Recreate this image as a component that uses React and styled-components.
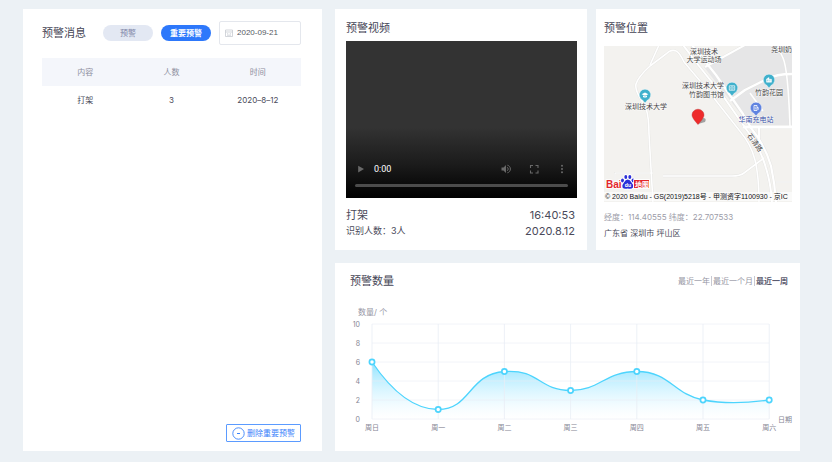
import React from "react";
import styled, { createGlobalStyle } from "styled-components";

const GlobalStyle = createGlobalStyle`
  *, *::before, *::after { box-sizing: border-box; }
  body {
    margin: 0;
    background: #ecf1f5;
    color: #4a4a5a;
    font-family: Inter, "Noto Sans CJK SC", sans-serif;
    font-size: 8px;
    line-height: 12px;
  }
  button, input { font: inherit; color: inherit; }
  h2, p { margin: 0; padding: 0; }
`;

const Page = styled.main`
  display: grid;
  grid-template-columns: minmax(0, 299fr) minmax(0, 465fr);
  gap: 13px;
  min-height: 100vh;
  padding: 9px 32px 11px 23px;
`;

const Column = styled.div`
  display: flex;
  flex-direction: column;
  gap: 13px;
`;

const TopRow = styled.div`
  display: grid;
  grid-template-columns: minmax(0, 252fr) minmax(0, 204fr);
  gap: 9px;
`;

const Card = styled.section`
  display: flex;
  flex-direction: column;
  background: #fff;
`;

const MessageCard = styled(Card)`
  padding: 12px 21px 9px 19px;
`;

const VideoCard = styled(Card)`
  padding: 10px 10px 11px 11px;
`;

const MapCard = styled(Card)`
  padding: 10px 8px 9px 8px;
`;

const ChartCard = styled(Card)`
  flex: 1;
  padding: 9px 0 0;
`;

const Title = styled.h2`
  font-size: 11px;
  line-height: 18px;
  font-weight: 400;
  color: #454555;
`;

const Toolbar = styled.div`
  display: flex;
  align-items: center;
  gap: 8px;
`;

const ToolbarTitle = styled(Title)`
  margin-right: 9px;
`;

const Pill = styled.button`
  width: 50px;
  height: 16px;
  padding: 0;
  border: 0;
  border-radius: 8px;
  line-height: 16px;
  font-weight: ${(p) => (p.$active ? 700 : 400)};
  color: ${(p) => (p.$active ? "#fff" : "#7d84a6")};
  background: ${(p) => (p.$active ? "#2d78fb" : "#e3e8f3")};
`;

const DateField = styled.label`
  display: flex;
  flex: 1;
  align-items: center;
  gap: 4px;
  min-width: 0;
  height: 24px;
  padding: 0 5px;
  border: 1px solid #e4e7ed;
  border-radius: 2px;
`;

const DateInput = styled.input`
  flex: 1;
  min-width: 0;
  padding: 0;
  border: 0;
  outline: 0;
  background: none;
  color: #555a62;
  font-family: "Liberation Sans", sans-serif;
`;

const Table = styled.table`
  width: 100%;
  margin-top: 13px;
  border-collapse: collapse;
  table-layout: fixed;
  text-align: center;

  th {
    height: 28px;
    padding: 0;
    font-weight: 400;
    color: #8e8ea0;
    background: #f4f6fb;
  }
  td {
    height: 28px;
    padding: 0;
  }
`;

const DeleteButton = styled.button`
  display: flex;
  align-items: center;
  align-self: flex-end;
  gap: 2px;
  height: 18px;
  margin-top: auto;
  padding: 0 5px;
  border: 1px solid #5b9bff;
  border-radius: 1px;
  background: #fff;
  color: #3a82fb;
`;

const Player = styled.div`
  display: flex;
  flex-direction: column;
  justify-content: flex-end;
  height: 157px;
  margin-top: 4px;
  padding: 0 9px 11px;
  background: linear-gradient(#333 0, #333 55%, #1c1c1c 78%, #000 100%);
`;

const Controls = styled.div`
  display: flex;
  align-items: center;
  gap: 18px;
  height: 16px;
  margin-bottom: 7px;
  padding: 0 1px;
`;

const PlayGroup = styled.div`
  display: flex;
  flex: 1;
  align-items: center;
  gap: 8px;
`;

const PlayTime = styled.span`
  color: #fff;
  font-family: Roboto, sans-serif;
  font-size: 9px;
`;

const ControlButton = styled.button`
  display: flex;
  padding: 0;
  border: 0;
  background: none;
  color: #696969;
`;

const Seek = styled.input`
  appearance: none;
  width: 100%;
  height: 3px;
  margin: 0;
  border-radius: 2px;
  background: #4c4c4c;
  &::-webkit-slider-thumb { appearance: none; width: 0; height: 0; }
`;

const InfoBlock = styled.div`
  margin-top: 9px;
`;

const InfoRow = styled.div`
  display: flex;
  align-items: center;
  justify-content: space-between;
  height: 16px;
  padding-right: 2px;
`;

const Large = styled.span`
  font-size: 11px;
`;

const Medium = styled.span`
  font-size: 9px;
`;

const MapDrawing = styled.svg`
  display: block;
  width: 100%;
  height: auto;
  margin-top: 9px;
`;

const Coordinates = styled.p`
  margin-top: 7px;
  line-height: 16px;
  color: #9c9ca8;
`;

const Address = styled.p`
  line-height: 16px;
`;

const ChartHeader = styled.header`
  display: flex;
  align-items: center;
  justify-content: space-between;
  padding: 0 11px 0 15px;
`;

const Ranges = styled.div`
  display: flex;
`;

const RangeButton = styled.button`
  padding: 0 1px;
  border: 0;
  border-left: ${(p) => (p.$first ? "0" : "1px solid #c9c9d2")};
  background: none;
  line-height: 10px;
  font-weight: ${(p) => (p.$active ? 700 : 400)};
  color: ${(p) => (p.$active ? "#5c5c70" : "#9696a4")};
`;

const ChartDrawing = styled.svg`
  display: block;
  width: 100%;
  height: auto;
`;

const CalendarIcon = () => (
  <svg width="8" height="8" viewBox="0 0 8 8" fill="none" stroke="#c0c4cc" strokeWidth=".7">
    <path d="M.5 1h7v6.5h-7zM.5 3h7M2 4.8h1.2M4.8 4.8h1.2M2 6.2h4" />
  </svg>
);

const MinusCircle = () => (
  <svg width="13" height="13" viewBox="0 0 13 13" fill="none" stroke="currentColor">
    <circle cx="6.5" cy="6.5" r="5.7" strokeWidth=".9" />
    <path d="M5 6.5h3" />
  </svg>
);

const PlayIcon = () => (
  <svg width="10" height="10" viewBox="0 0 10 10" fill="currentColor">
    <path d="M2.2 1.8v6.6L8 5.1z" />
  </svg>
);

const VolumeIcon = () => (
  <svg width="10" height="10" viewBox="0 0 10 10">
    <path d="M.5 3.5h2L5 1v8L2.5 6.5h-2z" fill="currentColor" />
    <path d="M6.2 3.2c1.3.9 1.3 2.7 0 3.6M6.4 1.2c4 1 4 6.6 0 7.6" fill="none" stroke="currentColor" />
  </svg>
);

const FullscreenIcon = () => (
  <svg width="10" height="10" viewBox="0 0 10 10" fill="none" stroke="currentColor" strokeWidth="1.1">
    <path d="M1.5 4V1.5H4M6.5 1.5H9V4M9 6.5V9H6.5M4 9H1.5V6.5" />
  </svg>
);

const MoreIcon = () => (
  <svg width="10" height="10" viewBox="0 0 10 10" fill="currentColor">
    <circle cx="5" cy="1.8" r="1" />
    <circle cx="5" cy="5" r="1" />
    <circle cx="5" cy="8.2" r="1" />
  </svg>
);

const days = ["周日", "周一", "周二", "周三", "周四", "周五", "周六"];
const values = [6, 1, 5, 3, 5, 2, 2];
const ticks = [10, 8, 6, 4, 2, 0];
const px = (i) => 37 + i * 66.2;
const py = (v) => 138 - v * 9.5;
const curve =
  "M37 81C56 109 78 128.5 103.2 128.5C136 128.5 133 93 169.4 90.5C205 88 203 109.5 235.6 109.5C265 109.5 270 90.5 301.8 90.5C335 90.5 338 113 368 119C390 123 412 122 434.2 119";

const CountChart = () => (
  <ChartDrawing viewBox="0 9 465 152" role="img" aria-label="预警数量">
    <defs>
      <linearGradient id="area" x1="0" y1="81" x2="0" y2="138" gradientUnits="userSpaceOnUse">
        <stop offset="0" stopColor="#8fe3ff" />
        <stop offset="1" stopColor="#fff" stopOpacity=".3" />
      </linearGradient>
    </defs>
    <text x="23" y="34" fontSize="8" fill="#9696a4">数量/ 个</text>
    <path d={`${curve}V138H37Z`} fill="url(#area)" />
    <g stroke="#e9edf5" strokeOpacity=".8">
      {ticks.map((t) => <path key={t} d={`M37 ${py(t)}H434`} strokeOpacity=".6" />)}
      {days.map((d, i) => <path key={d} d={`M${px(i)} 43V138`} />)}
    </g>
    <g fontSize="7" fill="#858594">
      {ticks.map((t) => <text key={t} x="25" y={py(t) + 3} textAnchor="end">{t}</text>)}
      {days.map((d, i) => <text key={d} x={px(i)} y="149" textAnchor="middle">{d}</text>)}
      <text x="443" y="141">日期</text>
    </g>
    <path d={curve} fill="none" stroke="#4dd4fd" strokeWidth="1.3" />
    {values.map((v, i) => (
      <circle key={days[i]} cx={px(i)} cy={py(v)} r="2.6" fill="#fff" stroke="#4dd4fd" strokeWidth="1.7" />
    ))}
  </ChartDrawing>
);

const roads = [
  ["M55 -1L46 19", 1.6],
  ["M72 5Q67 3 62 8L46 20Q34 31 32 38Q31 43 35 50L42 62Q45 72 45 88L49 157", 1.6],
  ["M72 5Q76 7 80 16L102 42L135 84Q147 98 151 114Q155 130 155 157", 1.6],
  ["M79 -1L95 20L119 50L142 83Q156 101 162 122Q167 138 168 157", 2],
  ["M88 -1L112 29L139 68L147 82Q161 99 167 120Q171 138 172 157", 2.2],
  ["M141 -1L101 21", 2],
  ["M188 28Q172 28 163 33L141 44L126 55", 2.4],
  ["M173 -1L179 12Q184 23 186 80", 1.6],
  ["M146 47L159 65", 1.6],
  ["M139 81H189", 3],
  ["M155 82V98", 2],
  ["M160 112L140 127Q136 130 128 130H59", 1.6],
  ["M172 136H189", 1],
  ["M49 127H11V157", 1],
];

const MapPin = ({ x, y, color, children }) => (
  <g transform={`translate(${x} ${y})`}>
    <path d="M0 8L-2.5 5A5.7 5.7 0 1 1 2.5 5Z" fill={color} stroke="#fff" strokeWidth=".4" />
    {children}
  </g>
);

const AreaMap = () => (
  <MapDrawing viewBox="0 0 188 156" role="img" aria-label="地图">
    <rect width="188" height="156" fill="#f3f2ef" />
    <path d="M140 0L100 21L140 72L146 81H188V0Z" fill="#e6e6e7" />
    <g fill="none" strokeLinejoin="round">
      {roads.map(([d, w]) => <path key={d} d={d} stroke="#e3e3e1" strokeWidth={w + 0.7} />)}
      {roads.map(([d, w]) => <path key={d} d={d} stroke="#fff" strokeWidth={w} />)}
    </g>
    <MapPin x={41} y={49} color="#3fb0cc">
      <path d="M-3.4 -.8L0 -2.4L3.4 -.8L0 .8ZM-2 .6V2Q0 3.2 2 2V.6L0 1.5Z" fill="#fff" />
    </MapPin>
    <MapPin x={128} y={42} color="#3fb0cc">
      <path d="M-2.7 -2.2H2.7V2.2H-2.7ZM0 -2.2V2.2M-1.7 -.6H-.8M.8 -.6H1.7M-1.7 .8H-.8M.8 .8H1.7" fill="none" stroke="#fff" strokeWidth=".7" />
    </MapPin>
    <MapPin x={165} y={34} color="#3fb0cc">
      <path d="M-2.5 2.2V-1L0 -2.6V-.8H2.5V2.2Z" fill="#fff" stroke="#fff" strokeWidth=".4" />
      <path d="M-1.2 -.4V1.3M.9 .3V1.3" stroke="#3fb0cc" strokeWidth=".7" />
    </MapPin>
    <MapPin x={152} y={62} color="#5f83e0">
      <path d="M-2 2.5V-2.5H1V2.5ZM1 -.5H2.2V1.8" fill="none" stroke="#fff" strokeWidth=".8" />
      <path d="M-.4 -1.4L-1.1 .2H0L-.7 1.6" fill="none" stroke="#fff" strokeWidth=".5" />
    </MapPin>
    <path d="M94 78L99 72Q103 72 101 76Z" fill="#777" opacity=".65" />
    <path d="M94 78.5Q88 72 88 69A6 5.8 0 1 1 100 69Q100 72 94 78.5Z" fill="#ee2b2b" stroke="#b92222" strokeWidth=".4" />
    <g fontSize="7" fill="#484848" stroke="#fff" strokeWidth="1" strokeOpacity=".7" paintOrder="stroke">
      <text x="100" y="8" textAnchor="middle">深圳技术</text>
      <text x="100" y="16" textAnchor="middle">大学运动场</text>
      <text x="167" y="6">尧圳奶</text>
      <text x="120" y="42" textAnchor="end">深圳技术大学</text>
      <text x="120" y="51" textAnchor="end">竹韵图书馆</text>
      <text x="165" y="49" textAnchor="middle">竹韵花园</text>
      <text x="42" y="63" textAnchor="middle">深圳技术大学</text>
      <text x="152" y="76" textAnchor="middle" fill="#3751a8">华南充电站</text>
      <text transform="translate(149 98) rotate(54)" textAnchor="middle">石清路</text>
    </g>
    <g stroke="#fff" strokeWidth="1.6" paintOrder="stroke">
      <text x="2" y="142" fontSize="10" fontWeight="700" fontFamily="Liberation Sans, sans-serif" fill="#e3262b">Bai</text>
      <g fill="#2b2fd8">
        <ellipse cx="18.5" cy="134.5" rx="1.5" ry="2" />
        <ellipse cx="21.8" cy="131" rx="1.5" ry="2.1" />
        <ellipse cx="25.8" cy="131" rx="1.5" ry="2.1" />
        <ellipse cx="29" cy="134.5" rx="1.5" ry="2" />
        <path d="M23.7 133.5Q26 133.5 27.5 136.5Q30 139 29 141.5Q27.5 143.5 23.7 142.5Q20 143.5 18.5 141.5Q17.5 139 20 136.5Q21.5 133.5 23.7 133.5Z" />
      </g>
      <rect x="30" y="134" width="15" height="8" fill="#e3262b" />
    </g>
    <text x="24" y="141" fontSize="5" fontWeight="700" textAnchor="middle" fill="#fff">du</text>
    <text x="38" y="141" fontSize="7" fontWeight="700" textAnchor="middle" fill="#fff">地图</text>
    <rect y="146" width="188" height="9" fill="#fff" opacity=".6" />
    <text x="1" y="153" fontSize="7" fontFamily="Liberation Sans, Noto Sans CJK SC, sans-serif" fill="#111">
      © 2020 Baidu - GS(2019)5218号 - 甲测资字1100930 - 京IC
    </text>
  </MapDrawing>
);

export default function App() {
  return (
    <>
      <GlobalStyle />
      <Page>
        <MessageCard>
          <Toolbar>
            <ToolbarTitle>预警消息</ToolbarTitle>
            <Pill>预警</Pill>
            <Pill $active>重要预警</Pill>
            <DateField>
              <CalendarIcon />
              <DateInput aria-label="日期" defaultValue="2020-09-21" />
            </DateField>
          </Toolbar>
          <Table>
            <thead><tr><th>内容</th><th>人数</th><th>时间</th></tr></thead>
            <tbody><tr><td>打架</td><td>3</td><td>2020–8–12</td></tr></tbody>
          </Table>
          <DeleteButton><MinusCircle />删除重要预警</DeleteButton>
        </MessageCard>
        <Column>
          <TopRow>
            <VideoCard>
              <Title>预警视频</Title>
              <Player>
                <Controls>
                  <PlayGroup>
                    <ControlButton aria-label="播放"><PlayIcon /></ControlButton>
                    <PlayTime>0:00</PlayTime>
                  </PlayGroup>
                  <ControlButton aria-label="音量"><VolumeIcon /></ControlButton>
                  <ControlButton aria-label="全屏"><FullscreenIcon /></ControlButton>
                  <ControlButton aria-label="更多"><MoreIcon /></ControlButton>
                </Controls>
                <Seek type="range" aria-label="进度" defaultValue="0" />
              </Player>
              <InfoBlock>
                <InfoRow><Large>打架</Large><Large>16:40:53</Large></InfoRow>
                <InfoRow><Medium>识别人数：3人</Medium><Large>2020.8.12</Large></InfoRow>
              </InfoBlock>
            </VideoCard>
            <MapCard>
              <Title>预警位置</Title>
              <AreaMap />
              <Coordinates>经度：114.40555 纬度：22.707533</Coordinates>
              <Address>广东省 深圳市 坪山区</Address>
            </MapCard>
          </TopRow>
          <ChartCard>
            <ChartHeader>
              <Title>预警数量</Title>
              <Ranges>
                <RangeButton $first>最近一年</RangeButton>
                <RangeButton>最近一个月</RangeButton>
                <RangeButton $active>最近一周</RangeButton>
              </Ranges>
            </ChartHeader>
            <CountChart />
          </ChartCard>
        </Column>
      </Page>
    </>
  );
}
